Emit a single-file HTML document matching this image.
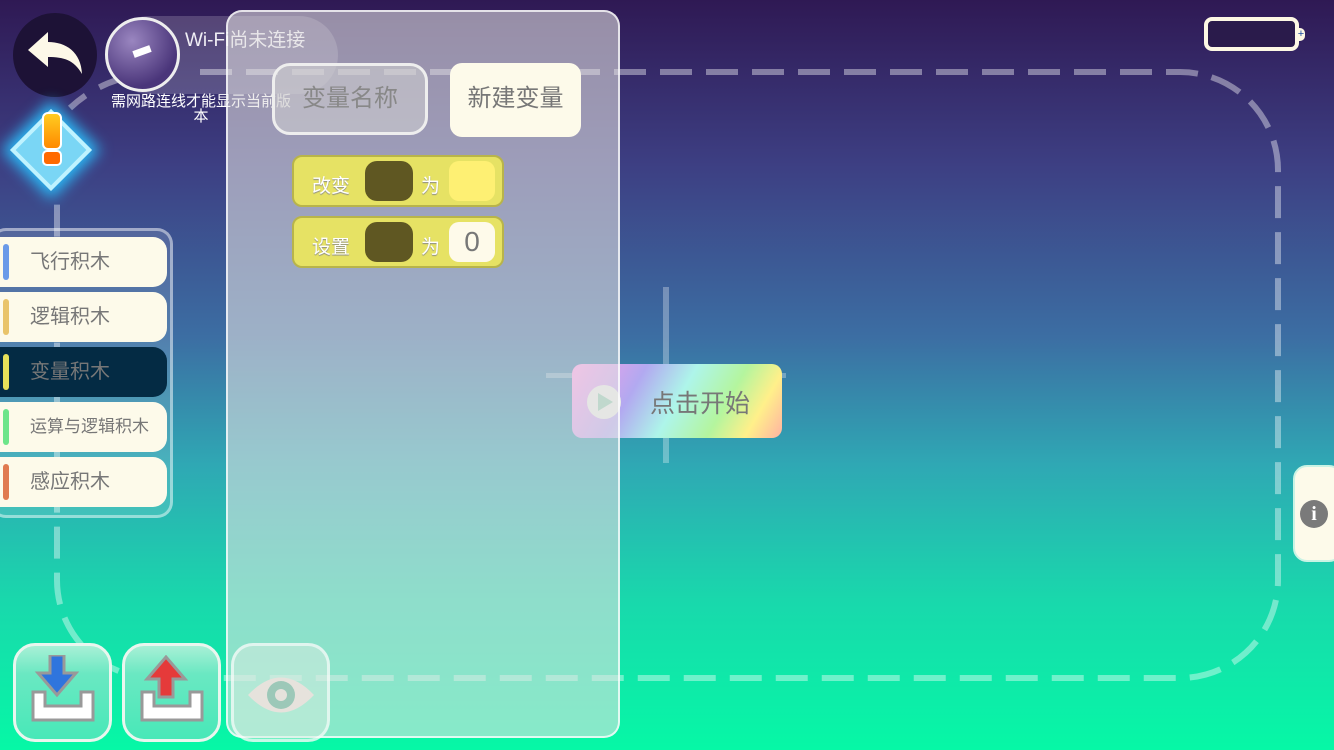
<!DOCTYPE html>
<html><head><meta charset="utf-8"><style>
*{margin:0;padding:0;box-sizing:border-box}
body{width:1334px;height:750px;overflow:hidden;position:relative;font-family:"Liberation Sans","Noto Sans CJK SC",sans-serif;
background:linear-gradient(180deg,#2f1954 0%,#3d3f83 22%,#3c6ea3 45%,#2fa8b4 62%,#19d8ac 80%,#06f8a6 100%)}
.abs{position:absolute}
.cat{position:absolute;left:0;width:167px;height:50px;background:#fdfaea;border-radius:0 14px 14px 0;font-size:20px;color:#777;line-height:50px;padding-left:30px}
.cat i{position:absolute;left:3px;top:7px;width:6px;height:36px;border-radius:3px}
.blk{position:absolute;left:292px;width:212px;height:52px;background:#e6e264;border:2px solid #b8b44a;border-radius:10px}
.blk .t{position:absolute;top:14px;color:#fff;font-size:19px;text-shadow:0 1px 1px #888}
.slot{position:absolute;left:71px;top:4px;width:48px;height:40px;background:#5f5722;border-radius:12px}
.btn{position:absolute;top:643px;width:99px;height:99px;border:3px solid #e9f6ee;border-radius:22px;background:linear-gradient(180deg,#a8f0d6 0%,#6ae8c2 30%,#48e8b8 100%)}
</style></head><body>
<svg class="abs" style="left:0;top:0" width="1334" height="750">
<path d="M200 72 H1180 A98 98 0 0 1 1278 170 V580 A98 98 0 0 1 1180 678 H155 A98 98 0 0 1 57 580 V200" fill="none" stroke="rgba(255,255,255,0.4)" stroke-width="6" stroke-dasharray="32 14"/>
<path d="M70 108 Q 100 80 140 75" fill="none" stroke="rgba(255,255,255,0.4)" stroke-width="6" stroke-dasharray="20 16"/>
<rect x="663" y="287" width="6" height="176" fill="rgba(255,255,255,0.3)"/>
<rect x="546" y="373" width="240" height="5" fill="rgba(255,255,255,0.3)"/>
</svg>
<!-- back -->
<div class="abs" style="left:13px;top:13px;width:84px;height:84px;border-radius:50%;background:#1d1236"></div>
<svg class="abs" style="left:26px;top:30px" width="60" height="50"><path d="M2 20 L22 2 V12 C40 12 55 22 56 44 C48 30 38 27 22 27 V37 Z" fill="#fdf8e8"/></svg>
<!-- drone -->
<div class="abs" style="left:110px;top:16px;width:228px;height:78px;border-radius:39px;background:rgba(255,255,255,0.18)"></div>
<div class="abs" style="left:105px;top:17px;width:75px;height:75px;border-radius:50%;border:3px solid #eee;background:radial-gradient(circle at 35% 30%,#9a86c0,#4a357a 70%)"></div>
<div class="abs" style="left:133px;top:48px;width:18px;height:7px;background:#fff;transform:rotate(-20deg)"></div>
<div class="abs" style="left:185px;top:25px;color:#f0eef5;font-size:19px">Wi-Fi尚未连接</div>
<div class="abs" style="left:108px;top:94px;width:186px;color:#fff;font-size:15px;line-height:15px;text-align:center">需网路连线才能显示当前版本</div>
<!-- warning -->
<div class="abs" style="left:22px;top:121px;width:58px;height:58px;transform:rotate(45deg);border:4px solid #bff3ff;background:#7ad6f5;box-shadow:0 0 14px 6px #2bb8f5"></div>
<div class="abs" style="left:42px;top:112px;width:20px;height:38px;border-radius:6px;background:linear-gradient(#ffcc22,#ff8a00);border:2px solid #fff"></div>
<div class="abs" style="left:42px;top:150px;width:20px;height:16px;border-radius:5px;background:#ff6a00;border:2px solid #fff"></div>
<!-- categories -->
<div class="abs" style="left:-10px;top:228px;width:183px;height:290px;border:3px solid rgba(255,255,255,0.45);border-radius:16px;background:rgba(255,255,255,0.12)"></div>
<div class="cat" style="top:237px"><i style="background:#6a9ae8"></i>飞行积木</div>
<div class="cat" style="top:292px"><i style="background:#e9c46a"></i>逻辑积木</div>
<div class="cat" style="top:347px;background:#042b44"><i style="background:#e6e15a"></i>变量积木</div>
<div class="cat" style="top:402px;font-size:17px"><i style="background:#6de58a"></i>运算与逻辑积木</div>
<div class="cat" style="top:457px"><i style="background:#e07a50"></i>感应积木</div>
<!-- start button -->
<div class="abs" style="left:572px;top:364px;width:210px;height:74px;border-radius:10px;background:linear-gradient(120deg,#ff9de8 0%,#b2a9f0 30%,#aef5ea 50%,#b4f59e 70%,#fff08a 85%,#ffb2a2 100%)"></div>
<div class="abs" style="left:650px;top:384px;color:#777;font-size:25px">点击开始</div>
<div class="abs" style="left:587px;top:385px;width:34px;height:34px;border-radius:50%;background:#e8ede6"></div>
<div class="abs" style="left:598px;top:393px;border-left:15px solid #8fcab0;border-top:9px solid transparent;border-bottom:9px solid transparent"></div>
<!-- panel -->
<div class="abs" style="left:226px;top:10px;width:394px;height:728px;border:2px solid rgba(255,255,255,0.75);border-radius:16px;background:rgba(228,226,226,0.58)"></div>
<div class="abs" style="left:272px;top:63px;width:156px;height:72px;border:3px solid #eee;border-radius:18px;background:rgba(210,210,210,0.55);color:#888;font-size:24px;text-align:center;line-height:66px">变量名称</div>
<div class="abs" style="left:450px;top:63px;width:131px;height:74px;border-radius:12px;background:#fdfaea;color:#777;font-size:24px;text-align:center;line-height:72px">新建变量</div>
<div class="blk" style="top:155px"><span class="t" style="left:18px">改变</span><div class="slot"></div><span class="t" style="left:127px">为</span><div class="abs" style="left:155px;top:4px;width:46px;height:40px;border-radius:10px;background:#fef073"></div></div>
<div class="blk" style="top:216px"><span class="t" style="left:18px">设置</span><div class="slot"></div><span class="t" style="left:127px">为</span><div class="abs" style="left:155px;top:4px;width:46px;height:40px;border-radius:10px;background:#fefaea;color:#777;font-size:28px;text-align:center;line-height:40px">0</div></div>
<!-- bottom buttons -->
<div class="btn" style="left:13px"></div>
<svg class="abs" style="left:28px;top:655px" width="70" height="75"><path d="M22 0 h14 v18 h12 l-19 22 l-19-22 h12z" fill="#2f75dd" stroke="#999" stroke-width="3"/><path d="M5 37 h12 v14 h36 v-14 h12 v28 h-60z" fill="#fff" stroke="#999" stroke-width="3"/></svg>
<div class="btn" style="left:122px"></div>
<svg class="abs" style="left:137px;top:655px" width="70" height="75"><path d="M36 42 h-14 v-18 h-12 l19 -22 l19 22 h-12z" fill="#e53a3a" stroke="#999" stroke-width="3"/><path d="M5 37 h12 v14 h36 v-14 h12 v28 h-60z" fill="#fff" stroke="#999" stroke-width="3"/></svg>
<div class="btn" style="left:231px;background:rgba(220,235,225,0.5);border-color:rgba(255,255,255,0.6)"></div>
<svg class="abs" style="left:246px;top:670px" width="70" height="50"><path d="M2 25 Q35 -10 68 25 Q35 60 2 25z" fill="#e6e2dc"/><circle cx="35" cy="25" r="14" fill="#9cc8b8"/><circle cx="35" cy="25" r="6" fill="#e6e2dc"/></svg>
<!-- battery -->
<div class="abs" style="left:1204px;top:17px;width:95px;height:34px;border:4px solid #fdf8e4;border-radius:8px;background:#2a1b4b"></div>
<div class="abs" style="left:1297px;top:28px;width:8px;height:13px;border-radius:0 5px 5px 0;background:#fdf8e4;color:#1b4aa0;font-size:11px;line-height:13px;text-align:center">+</div>
<!-- info -->
<div class="abs" style="left:1293px;top:465px;width:50px;height:97px;border-radius:14px;background:#fdfaea;border:2px solid #c9f3e4"></div>
<div class="abs" style="left:1300px;top:500px;width:28px;height:28px;border-radius:50%;background:#7a7a7a;color:#fff;font-weight:bold;font-size:20px;text-align:center;line-height:28px;font-family:'Liberation Serif',serif">i</div>
</body></html>
